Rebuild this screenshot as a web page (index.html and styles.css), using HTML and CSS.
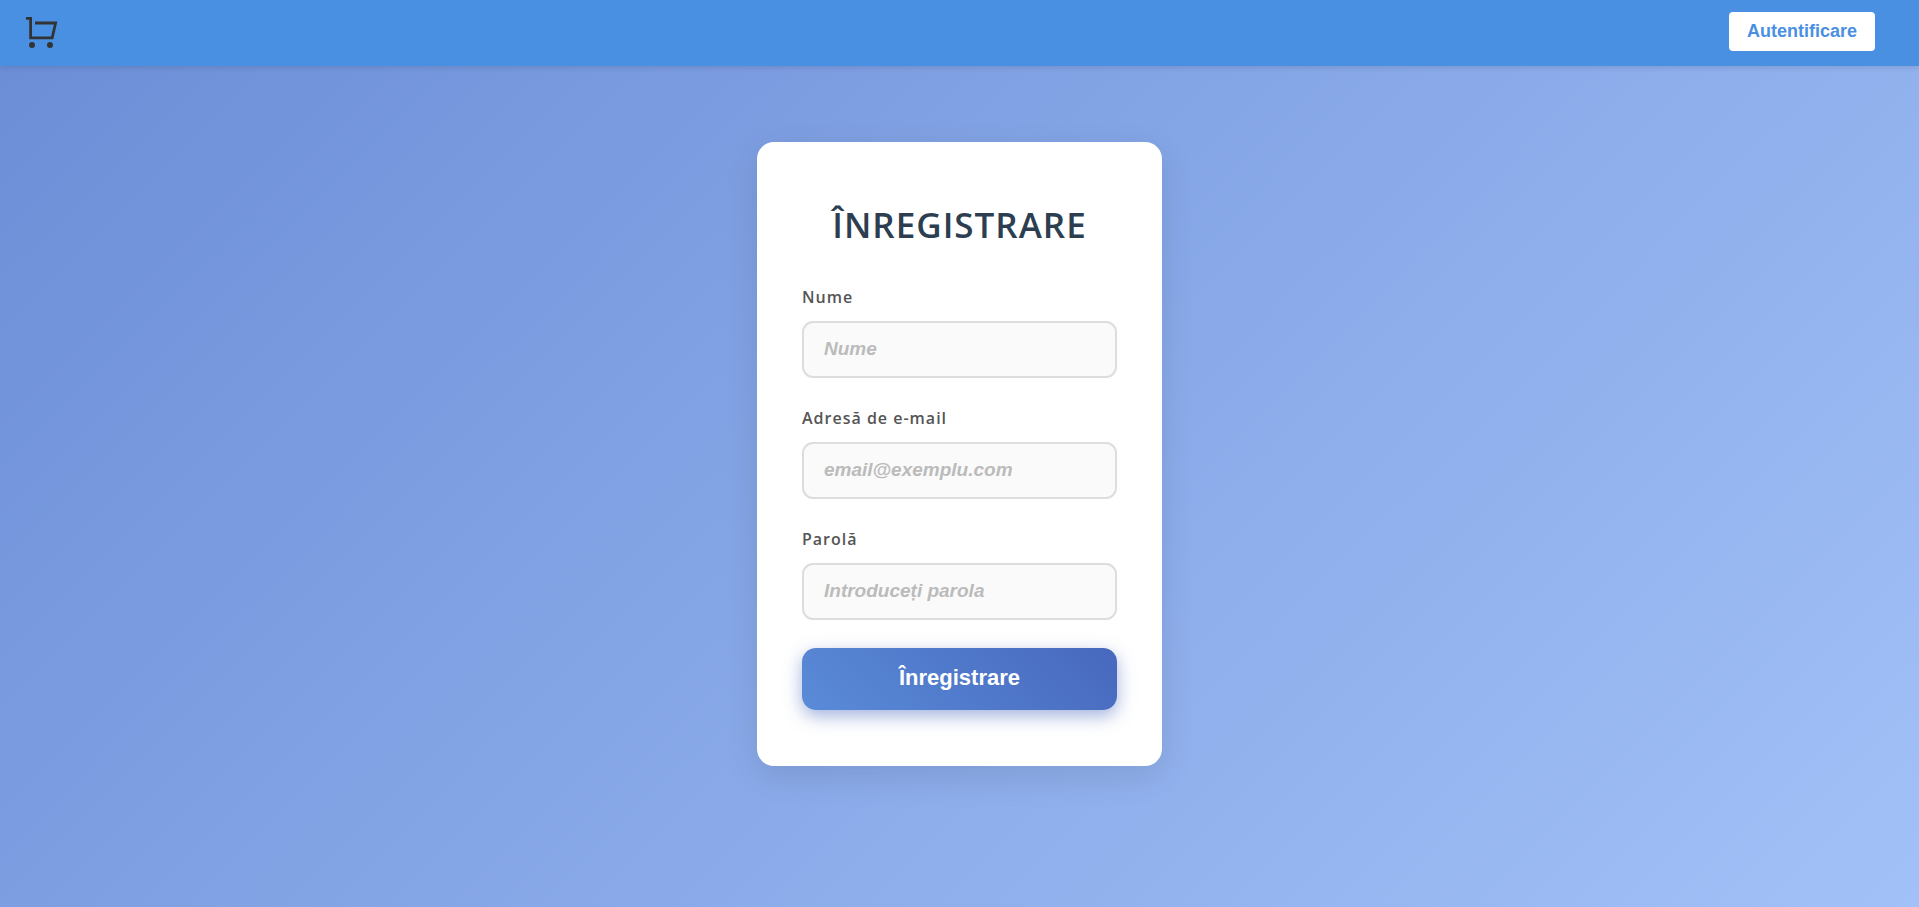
FILE: index.html
```
<!DOCTYPE html>
<html lang="ro">
<head>
<meta charset="utf-8">
<meta name="viewport" content="width=device-width, initial-scale=1">
<title>Înregistrare</title>
<link rel="stylesheet" href="styles.css">
</head>
<body>
<header class="topbar">
  <a class="cart-link" href="#" aria-label="Coș de cumpărături">
    <svg class="cart-icon" viewBox="0 0 32 32" fill="none" stroke="#333" stroke-width="2.8">
      <path d="M0 2.4H4.6V21.8H26.2L29.6 7H9"/>
      <circle cx="6" cy="29" r="3" fill="#333" stroke="none"/>
      <circle cx="24" cy="29" r="3" fill="#333" stroke="none"/>
    </svg>
  </a>
  <button class="login-button" type="button">Autentificare</button>
</header>
<main class="page">
  <form class="card">
    <h1 class="card-title">ÎNREGISTRARE</h1>
    <div class="field">
      <label class="field-label" for="name">Nume</label>
      <input class="field-input" id="name" type="text" placeholder="Nume">
    </div>
    <div class="field">
      <label class="field-label" for="email">Adresă de e-mail</label>
      <input class="field-input" id="email" type="email" placeholder="email@exemplu.com">
    </div>
    <div class="field">
      <label class="field-label" for="password">Parolă</label>
      <input class="field-input" id="password" type="password" placeholder="Introduceți parola">
    </div>
    <button class="submit-button" type="submit">Înregistrare</button>
  </form>
</main>
</body>
</html>
```
FILE: styles.css
```
* {
  box-sizing: border-box;
}

body {
  margin: 0;
  min-height: 100vh;
  display: flex;
  flex-direction: column;
  font-family: "Open Sans", "Noto Sans", sans-serif;
  background: linear-gradient(135deg, #6b8dd6, #a2c1f8);
}

.topbar {
  display: flex;
  align-items: center;
  justify-content: space-between;
  padding: 12px 44px 15px 26px;
  background: #4a90e2;
  box-shadow: 0 2px 5px rgba(0, 0, 0, 0.1);
}

.cart-link {
  display: flex;
}

.cart-icon {
  width: 32px;
  height: 32px;
}

.login-button {
  padding: 0 18px;
  border: 0;
  border-radius: 4px;
  background: #fff;
  color: #4a90e2;
  font: bold 18px/39px "Liberation Sans", Arial, sans-serif;
}

.page {
  flex: 1;
  display: flex;
  align-items: flex-start;
  justify-content: center;
  padding: 76px 16px;
}

.card {
  display: flex;
  flex-direction: column;
  gap: 28px;
  width: 100%;
  max-width: 405px;
  padding: 56px 45px;
  border-radius: 17px;
  background: #fff;
  box-shadow: 0 11px 34px rgba(0, 0, 0, 0.1);
}

.card-title {
  margin: 0 0 7px;
  padding-top: 2px;
  text-align: center;
  color: #2c3e50;
  font-size: 35px;
  font-weight: 600;
  line-height: 50px;
  letter-spacing: 1px;
}

.field {
  display: flex;
  flex-direction: column;
  gap: 12px;
}

.field-label {
  color: #555;
  font-size: 16px;
  font-weight: 600;
  line-height: 24px;
  letter-spacing: 1px;
}

.field-input {
  width: 100%;
  height: 57px;
  padding: 0 20px 2px;
  border: 2px solid #ddd;
  border-radius: 11px;
  background: #fafafa;
  color: #333;
  font: bold 19px "Liberation Sans", Arial, sans-serif;
}

.field-input::placeholder {
  color: #bbb;
  font-style: italic;
}

.submit-button {
  padding: 0 0 2px;
  border: 0;
  border-radius: 14px;
  background: linear-gradient(45deg, #5a8bd8, #4768be);
  box-shadow: 0 6px 17px rgba(71, 104, 190, 0.5);
  color: #fff;
  font: bold 22px/60px "Liberation Sans", Arial, sans-serif;
}
```
